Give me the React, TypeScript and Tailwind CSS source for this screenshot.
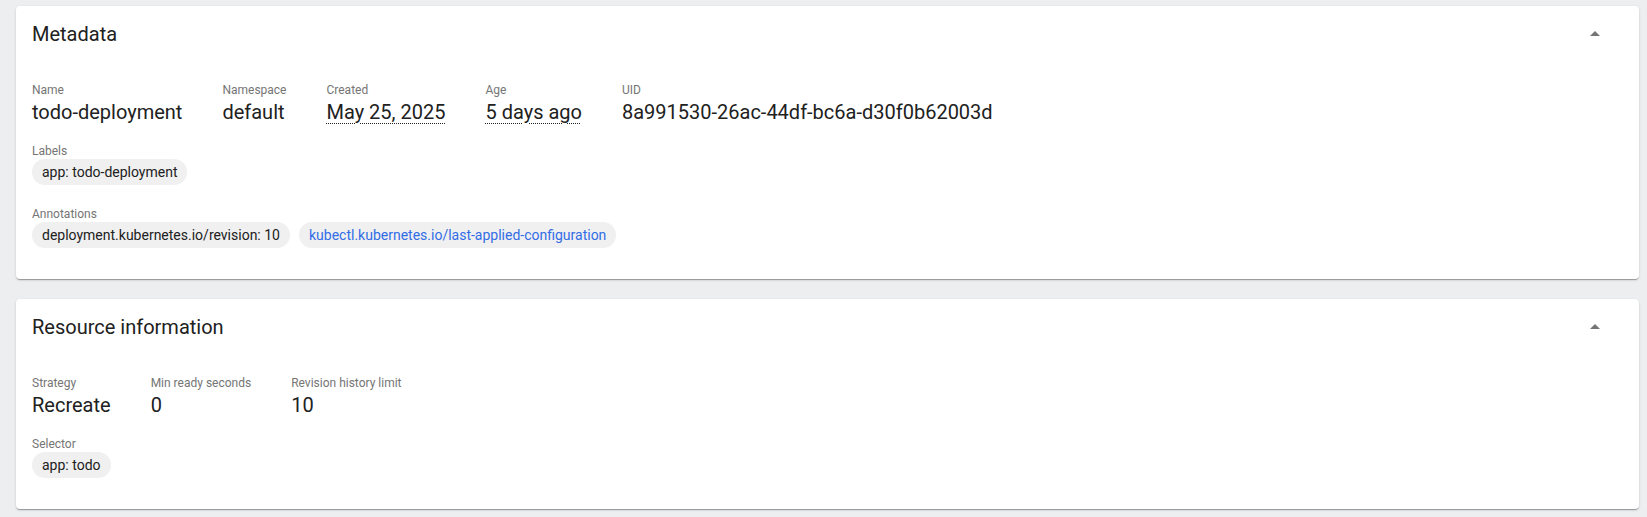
import React from 'react'

type Prop = { label: string; value: string; dotted?: boolean }

const metadata: Prop[] = [
  { label: 'Name', value: 'todo-deployment' },
  { label: 'Namespace', value: 'default' },
  { label: 'Created', value: 'May 25, 2025', dotted: true },
  { label: 'Age', value: '5 days ago', dotted: true },
  { label: 'UID', value: '8a991530-26ac-44df-bc6a-d30f0b62003d' },
]

const resourceInfo: Prop[] = [
  { label: 'Strategy', value: 'Recreate' },
  { label: 'Min ready seconds', value: '0' },
  { label: 'Revision history limit', value: '10' },
]

function ArrowDropUp() {
  return (
    <svg viewBox="0 0 24 24" className="w-6 h-6 fill-[#757575]">
      <path d="M7 14l5-5 5 5z" />
    </svg>
  )
}

function Card({ title, children }: { title: string; children: React.ReactNode }) {
  return (
    <div className="bg-white rounded-[4px] shadow-[0_2px_1px_-1px_rgba(0,0,0,0.2),0_1px_1px_0_rgba(0,0,0,0.14),0_1px_3px_0_rgba(0,0,0,0.12)]">
      <div className="flex items-center justify-between pt-4 pl-4 pr-8">
        <h2 className="text-[20px] leading-6 font-normal text-[#212121]">{title}</h2>
        <ArrowDropUp />
      </div>
      <div className="flex flex-col px-4 pt-9 pb-[31px]">{children}</div>
    </div>
  )
}

function PropRow({ items }: { items: Prop[] }) {
  return (
    <div className="flex gap-10 mb-[17px]">
      {items.map((p) => (
        <div key={p.label} className="flex flex-col">
          <span className="text-[12px] leading-4 text-[#757575]">{p.label}</span>
          <span className="text-[20px] leading-7 text-[#212121]">
            <span className={p.dotted ? 'underline decoration-dotted decoration-1 underline-offset-[4px]' : ''}>
              {p.value}
            </span>
          </span>
        </div>
      ))}
    </div>
  )
}

function ChipGroup({ label, chips }: { label: string; chips: { text: string; link?: boolean }[] }) {
  return (
    <div className="flex flex-col mb-[21px] last:mb-0">
      <span className="text-[12px] leading-4 text-[#757575]">{label}</span>
      <div className="flex gap-[9px]">
        {chips.map((c) => (
          <span
            key={c.text}
            className={
              'h-[26px] px-[10px] flex items-center rounded-full bg-[#f0f0f0] text-[14px] ' +
              (c.link ? 'text-[#326de6]' : 'text-[#212121]')
            }
          >
            {c.text}
          </span>
        ))}
      </div>
    </div>
  )
}

export default function App() {
  return (
    <div className="min-h-[517px] bg-[#edeef0] pt-[6px] pl-4 pr-2 pb-4 font-['Roboto',sans-serif]">
      <div className="flex flex-col gap-5">
        <Card title="Metadata">
          <PropRow items={metadata} />
          <ChipGroup label="Labels" chips={[{ text: 'app: todo-deployment' }]} />
          <ChipGroup
            label="Annotations"
            chips={[
              { text: 'deployment.kubernetes.io/revision: 10' },
              { text: 'kubectl.kubernetes.io/last-applied-configuration', link: true },
            ]}
          />
        </Card>
        <Card title="Resource information">
          <PropRow items={resourceInfo} />
          <ChipGroup label="Selector" chips={[{ text: 'app: todo' }]} />
        </Card>
      </div>
    </div>
  )
}
